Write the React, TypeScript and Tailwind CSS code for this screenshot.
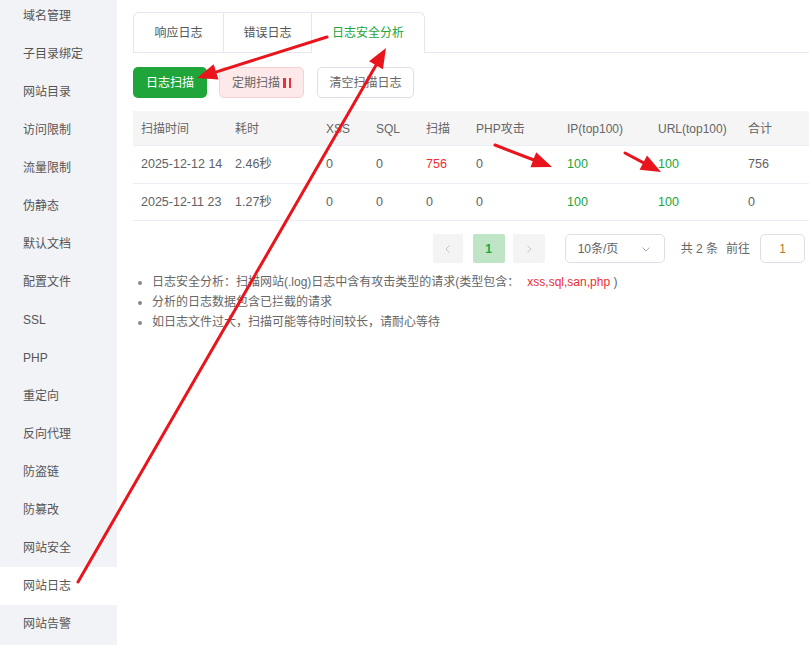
import React from 'react';

const menu = [
  '域名管理', '子目录绑定', '网站目录', '访问限制', '流量限制', '伪静态', '默认文档', '配置文件',
  'SSL', 'PHP', '重定向', '反向代理', '防盗链', '防篡改', '网站安全', '网站日志', '网站告警',
];

const rows = [
  { time: '2025-12-12 14', cost: '2.46秒', xss: '0', sql: '0', scan: '756', php: '0', ip: '100', url: '100', total: '756' },
  { time: '2025-12-11 23', cost: '1.27秒', xss: '0', sql: '0', scan: '0', php: '0', ip: '100', url: '100', total: '0' },
];

const cols = 'grid grid-cols-[94px_91px_50px_50px_50px_91px_91px_90px_1fr]';

// red annotation arrows drawn on top of the page
const arrows: [number, number, number, number][] = [
  [327, 37, 197, 78],
  [78, 582, 386, 48],
  [495, 145, 552, 167],
  [625, 153, 661, 172],
];

function Arrow({ x1, y1, x2, y2 }: { x1: number; y1: number; x2: number; y2: number }) {
  const dx = x2 - x1;
  const dy = y2 - y1;
  const len = Math.hypot(dx, dy);
  const ux = dx / len;
  const uy = dy / len;
  const head = 20;
  const half = 8;
  const bx = x2 - ux * head;
  const by = y2 - uy * head;
  const pts = `${x2},${y2} ${bx - uy * half},${by + ux * half} ${bx + uy * half},${by - ux * half}`;
  return (
    <g>
      <line x1={x1} y1={y1} x2={bx + ux * 2} y2={by + uy * 2} stroke="#e8151d" strokeWidth={3} strokeLinecap="round" />
      <polygon points={pts} fill="#e8151d" />
    </g>
  );
}

export default function App() {
  return (
    <div
      className="relative flex w-[809px] h-[645px] overflow-hidden bg-white text-[#555]"
      style={{ fontFamily: '"Liberation Sans", "Noto Sans CJK SC", sans-serif' }}
    >
      {/* sidebar */}
      <div className="w-[117px] shrink-0 bg-[#f2f3f7]">
        <div className="-mt-[3px]">
          {menu.map(m => (
            <div
              key={m}
              className={`h-[38px] flex items-center pl-[23px] text-[12px] text-[#555] ${m === '网站日志' ? 'bg-white' : ''}`}
            >
              {m}
            </div>
          ))}
        </div>
      </div>

      {/* main */}
      <div className="flex-1 pl-[16px] pt-[12px] min-w-0">
        <div className="flex border-b border-[#e4e7ed]">
          <div className="flex">
            <div className="h-[40px] w-[91px] flex items-center justify-center text-[12px] border border-b-0 border-[#e4e7ed] rounded-tl-[6px]">响应日志</div>
            <div className="h-[40px] w-[87px] flex items-center justify-center text-[12px] border-t border-[#e4e7ed]">错误日志</div>
            <div className="h-[41px] -mb-px w-[114px] flex items-center justify-center text-[12px] border border-b-0 border-[#e4e7ed] rounded-tr-[6px] bg-white text-[#20a53a]">日志安全分析</div>
          </div>
        </div>

        <div className="flex items-center mt-[14px] text-[12px]">
          <button className="h-[31px] w-[74px] rounded-[5px] bg-[#20a53a] text-white">日志扫描</button>
          <button className="ml-[12px] h-[31px] w-[85px] rounded-[5px] bg-[#fde9ea] border border-[#f9cfd2] text-[#666] flex items-center justify-center">
            定期扫描
            <span className="ml-[3px] flex gap-[3px]">
              <span className="w-[2.5px] h-[10px] bg-[#e8323b]" />
              <span className="w-[2.5px] h-[10px] bg-[#e8323b]" />
            </span>
          </button>
          <button className="ml-[13px] h-[31px] w-[97px] rounded-[5px] bg-white border border-[#dcdfe6] text-[#666]">清空扫描日志</button>
        </div>

        {/* table */}
        <div className="mt-[13px]">
          <div className={`${cols} h-[35px] items-center bg-[#f5f5f6] text-[12px] text-[#666] border-b border-[#ebeef5]`}>
            {['扫描时间', '耗时', 'XSS', 'SQL', '扫描', 'PHP攻击', 'IP(top100)', 'URL(top100)', '合计'].map(h => (
              <div key={h} className="pl-[8px] pt-[1px] whitespace-nowrap">{h}</div>
            ))}
          </div>
          {rows.map((r, i) => (
            <div key={r.time} className={`${cols} ${i === 0 ? 'h-[38px]' : 'h-[37px]'} items-center text-[12.5px] text-[#606266] border-b border-[#ebeef5]`}>
              <div className="pl-[8px] whitespace-nowrap">{r.time}</div>
              <div className="pl-[8px]">{r.cost}</div>
              <div className="pl-[8px]">{r.xss}</div>
              <div className="pl-[8px]">{r.sql}</div>
              <div className={`pl-[8px] ${r.scan !== '0' ? 'text-[#ef2d36]' : ''}`}>{r.scan}</div>
              <div className="pl-[8px]">{r.php}</div>
              <div className="pl-[8px] text-[#20a53a]">{r.ip}</div>
              <div className="pl-[8px] text-[#20a53a]">{r.url}</div>
              <div className="pl-[8px]">{r.total}</div>
            </div>
          ))}
        </div>

        {/* pagination */}
        <div className="flex items-center justify-end pr-[4px] mt-[13px] text-[12px] text-[#666]">
          <div className="w-[30px] h-[29px] bg-[#f4f4f5] rounded-[2px] flex items-center justify-center">
            <svg width="10" height="10" viewBox="0 0 10 10"><path d="M6.5 1.5 3 5l3.5 3.5" fill="none" stroke="#c0c4cc" strokeWidth="1" /></svg>
          </div>
          <div className="ml-[10px] w-[32px] h-[29px] bg-[#bfe5c6] rounded-[2px] flex items-center justify-center text-[#20a53a] font-bold">1</div>
          <div className="ml-[8px] w-[32px] h-[29px] bg-[#f4f4f5] rounded-[2px] flex items-center justify-center">
            <svg width="10" height="10" viewBox="0 0 10 10"><path d="M3.5 1.5 7 5 3.5 8.5" fill="none" stroke="#c0c4cc" strokeWidth="1" /></svg>
          </div>
          <div className="ml-[20px] w-[100px] h-[29px] border border-[#dcdfe6] rounded-[5px] flex items-center justify-between pl-[12px] pr-[12px]">
            <span className="text-[#606266]">10条/页</span>
            <svg width="12" height="12" viewBox="0 0 12 12"><path d="M2.5 4.5 6 8l3.5-3.5" fill="none" stroke="#a8abb2" strokeWidth="1" /></svg>
          </div>
          <span className="ml-[16px]">共 2 条</span>
          <span className="ml-[8px]">前往</span>
          <div className="ml-[10px] w-[45px] h-[29px] border border-[#dcdfe6] rounded-[5px] flex items-center justify-center text-[#b07a2a]">1</div>
        </div>

        {/* notes */}
        <ul className="mt-[9px] pl-[19px] list-disc text-[12px] text-[#666] leading-[20px] marker:text-[#888]">
          <li>
            日志安全分析：扫描网站(.log)日志中含有攻击类型的请求(类型包含：
            <span className="ml-[8px] text-[#ef2d36]">xss,sql,san,php</span> )
          </li>
          <li>分析的日志数据包含已拦截的请求</li>
          <li>如日志文件过大，扫描可能等待时间较长，请耐心等待</li>
        </ul>
      </div>

      <svg className="absolute inset-0 pointer-events-none" width="809" height="645">
        {arrows.map(([a, b, c, d], i) => (
          <Arrow key={i} x1={a} y1={b} x2={c} y2={d} />
        ))}
      </svg>
    </div>
  );
}
